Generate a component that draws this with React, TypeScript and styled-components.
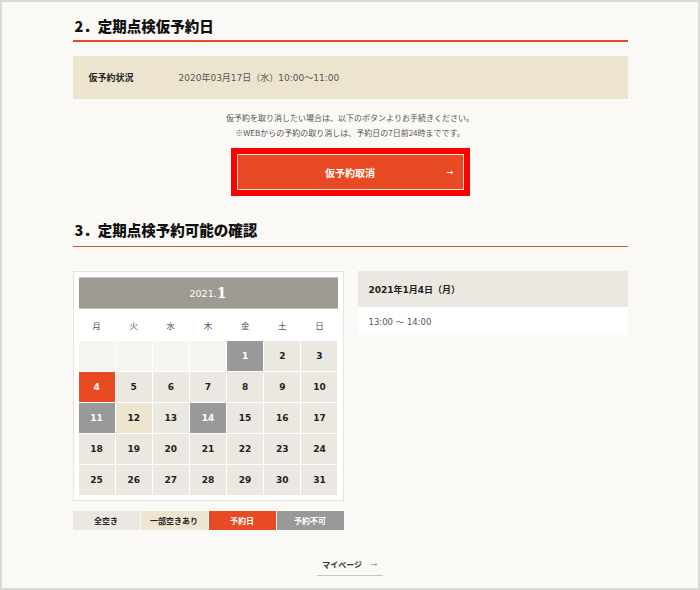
import styled, { createGlobalStyle } from 'styled-components'

const GlobalStyle = createGlobalStyle`
  html, body {
    margin: 0;
    padding: 0;
    background: #faf9f5;
  }
  * { box-sizing: border-box; }
`

const JP = `"DejaVu Sans", "Noto Sans CJK JP", sans-serif`

const Frame = styled.div`
  width: 700px;
  height: 590px;
  border: 2px solid #dcdad4;
  background: #faf9f5;
  font-family: ${JP};
  color: #333;
`

const Inner = styled.div`
  width: 555px;
  margin: 0 auto;
  display: flex;
  flex-direction: column;
`

const Heading = styled.h2<{ $thin?: boolean }>`
  margin: ${({ $thin }) => ($thin ? '24px' : '14px')} 0 0;
  padding: 0 0 ${({ $thin }) => ($thin ? '6px' : '4px')} 2px;
  font-family: "Noto Sans CJK JP", sans-serif;
  font-size: 14.5px;
  line-height: 20px;
  font-weight: 900;
  color: #111;
  border-bottom: ${({ $thin }) => ($thin ? '1px solid #c9553a' : '2px solid #e8482a')};
`

const StatusBox = styled.div`
  margin-top: 14px;
  height: 43px;
  background: #ece4cf;
  display: flex;
  align-items: center;
  padding: 0 16px;
  font-size: 9px;
`

const StatusLabel = styled.span`
  width: 90px;
  font-family: "Noto Sans CJK JP", sans-serif;
  font-weight: 700;
  color: #222;
`

const StatusValue = styled.span`
  color: #555;
`

const Notes = styled.div`
  margin-top: 11px;
  text-align: center;
  font-family: "Noto Sans CJK JP", sans-serif;
  font-size: 8px;
  line-height: 15px;
  color: #555;
`

const ButtonOutline = styled.div`
  align-self: center;
  margin-top: 8px;
  width: 239px;
  height: 48px;
  border: 6px solid #ff0000;
`

const CancelButton = styled.button`
  width: 100%;
  height: 100%;
  border: 1px solid #fbe3dc;
  background: #e84a24;
  color: #fff;
  font-family: "Noto Sans CJK JP", sans-serif;
  font-size: 10px;
  font-weight: 700;
  display: flex;
  align-items: center;
  justify-content: center;
  position: relative;
  cursor: pointer;
`

const ButtonArrow = styled.span`
  position: absolute;
  right: 9px;
  top: 50%;
  transform: translateY(-50%);
  font-size: 8px;
  font-family: "DejaVu Sans", sans-serif;
`

const Row = styled.div`
  margin-top: 24px;
  display: flex;
  justify-content: space-between;
  align-items: flex-start;
`

const CalendarCol = styled.div`
  width: 271px;
  display: flex;
  flex-direction: column;
`

const CalendarCard = styled.div`
  background: #fff;
  border: 1px solid #e6e4df;
  padding: 5px;
`

const MonthBar = styled.div`
  height: 32px;
  background: #9e9a94;
  border-top: 1px solid #c6c3bd;
  border-bottom: 1px solid #c6c3bd;
  color: #fff;
  display: flex;
  align-items: center;
  justify-content: center;
  font-family: "DejaVu Sans", sans-serif;
  font-size: 9.5px;
`

const MonthNum = styled.span`
  font-size: 14px;
  font-weight: 700;
  font-family: "DejaVu Serif", serif;
  margin-bottom: 1px;
`

const Grid = styled.div`
  display: grid;
  grid-template-columns: repeat(7, 1fr);
  column-gap: 1px;
  row-gap: 1px;
`

const WeekDay = styled.div`
  height: 31px;
  display: flex;
  align-items: center;
  justify-content: center;
  font-family: "Noto Sans CJK JP", sans-serif;
  font-size: 8.5px;
  color: #555;
`

type CellKind = 'empty' | 'free' | 'partial' | 'booked' | 'closed'

const cellBg: Record<CellKind, string> = {
  empty: '#f6f5f1',
  free: '#ebe8e2',
  partial: '#ede5cf',
  booked: '#e84a24',
  closed: '#999999',
}

const DayCell = styled.div<{ $kind: CellKind }>`
  height: 30px;
  background: ${({ $kind }) => cellBg[$kind]};
  color: ${({ $kind }) => ($kind === 'booked' || $kind === 'closed' ? '#fff' : '#222')};
  display: flex;
  align-items: center;
  justify-content: center;
  font-family: "DejaVu Sans", sans-serif;
  font-size: 9px;
  font-weight: 700;
`

const Legend = styled.div`
  margin-top: 10px;
  display: flex;
  gap: 1px;
`

const LegendItem = styled.div<{ $kind: CellKind }>`
  flex: 1;
  height: 19px;
  background: ${({ $kind }) => cellBg[$kind]};
  color: ${({ $kind }) => ($kind === 'booked' || $kind === 'closed' ? '#fff' : '#222')};
  display: flex;
  align-items: center;
  justify-content: center;
  font-family: "Noto Sans CJK JP", sans-serif;
  font-size: 8px;
  font-weight: 700;
`

const SlotPanel = styled.div`
  width: 270px;
  display: flex;
  flex-direction: column;
`

const SlotHead = styled.div`
  height: 36px;
  background: #ebe8e2;
  padding: 0 11px;
  display: flex;
  align-items: center;
  font-family: ${JP};
  font-size: 9px;
  font-weight: 700;
  color: #222;
`

const SlotBody = styled.div`
  height: 28px;
  background: #fff;
  padding: 0 11px;
  display: flex;
  align-items: center;
  font-size: 8.5px;
  color: #555;
`

const Footer = styled.div`
  margin-top: 29px;
  display: flex;
  justify-content: center;
`

const MyPageLink = styled.a`
  display: inline-flex;
  align-items: center;
  gap: 9px;
  padding: 0 5px 5px;
  border-bottom: 1px solid #c8c6c1;
  font-family: "Noto Sans CJK JP", sans-serif;
  font-size: 8px;
  font-weight: 700;
  color: #333;
  text-decoration: none;
`

const LinkArrow = styled.span`
  color: #aaa;
  font-family: "DejaVu Sans", sans-serif;
  font-size: 8px;
`

const weekdays = ['月', '火', '水', '木', '金', '土', '日']

const kindOf = (d: number): CellKind => {
  if (d === 4) return 'booked'
  if (d === 1 || d === 11 || d === 14) return 'closed'
  if (d === 12) return 'partial'
  return 'free'
}

export default function App() {
  const cells: { day: number | null }[] = [
    ...Array.from({ length: 4 }, () => ({ day: null })),
    ...Array.from({ length: 31 }, (_, i) => ({ day: i + 1 })),
  ]

  return (
    <>
      <GlobalStyle />
      <Frame>
        <Inner>
          <Heading>2．定期点検仮予約日</Heading>
          <StatusBox>
            <StatusLabel>仮予約状況</StatusLabel>
            <StatusValue>2020年03月17日（水）10:00～11:00</StatusValue>
          </StatusBox>
          <Notes>
            仮予約を取り消したい場合は、以下のボタンよりお手続きください。
            <br />
            ※WEBからの予約の取り消しは、予約日の7日前24時までです。
          </Notes>
          <ButtonOutline>
            <CancelButton>
              仮予約取消
              <ButtonArrow>→</ButtonArrow>
            </CancelButton>
          </ButtonOutline>

          <Heading $thin>3．定期点検予約可能の確認</Heading>
          <Row>
            <CalendarCol>
              <CalendarCard>
                <MonthBar>
                  2021.<MonthNum>1</MonthNum>
                </MonthBar>
                <Grid>
                  {weekdays.map((w) => (
                    <WeekDay key={w}>{w}</WeekDay>
                  ))}
                  {cells.map((c, i) =>
                    c.day === null ? (
                      <DayCell key={i} $kind="empty" />
                    ) : (
                      <DayCell key={i} $kind={kindOf(c.day)}>
                        {c.day}
                      </DayCell>
                    )
                  )}
                </Grid>
              </CalendarCard>
              <Legend>
                <LegendItem $kind="free">全空き</LegendItem>
                <LegendItem $kind="partial">一部空きあり</LegendItem>
                <LegendItem $kind="booked">予約日</LegendItem>
                <LegendItem $kind="closed">予約不可</LegendItem>
              </Legend>
            </CalendarCol>
            <SlotPanel>
              <SlotHead>2021年1月4日（月）</SlotHead>
              <SlotBody>13:00 ～ 14:00</SlotBody>
            </SlotPanel>
          </Row>
          <Footer>
            <MyPageLink href="#">
              マイページ
              <LinkArrow>→</LinkArrow>
            </MyPageLink>
          </Footer>
        </Inner>
      </Frame>
    </>
  )
}
